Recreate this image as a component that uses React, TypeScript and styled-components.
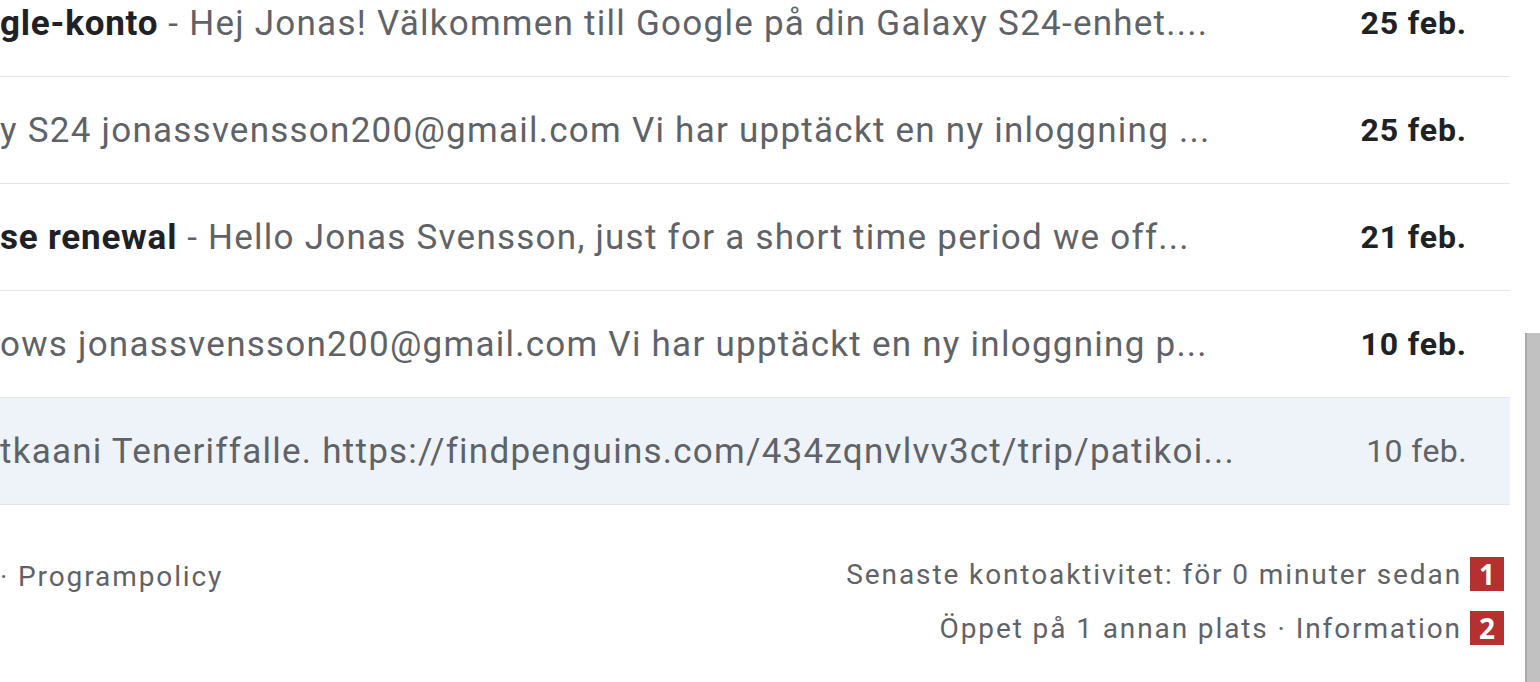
import React from 'react'
import styled, {createGlobalStyle} from 'styled-components'

const GlobalStyle = createGlobalStyle`
  html, body {
    margin: 0;
    padding: 0;
    background: #ffffff;
    overflow: hidden;
  }
  body {
    font-family: Roboto, "Noto Sans", Arial, sans-serif;
  }
`

const Page = styled.div`
  display: flex;
  width: 1540px;
  height: 682px;
  overflow: hidden;
  background: #ffffff;
`

const Main = styled.div`
  width: 1510px;
  display: flex;
  flex-direction: column;
`

const List = styled.div`
  display: flex;
  flex-direction: column;
  margin-top: -30px;
`

const Row = styled.div<{$selected?: boolean}>`
  display: flex;
  align-items: center;
  height: 106px;
  border-bottom: 1px solid #e3e7eb;
  background: ${p => (p.$selected ? '#eef3fa' : '#ffffff')};
`

const Line = styled.div`
  flex: 1;
  min-width: 0;
  white-space: nowrap;
  overflow: hidden;
  font-size: 35px;
  letter-spacing: 1.25px;
`

const Subject = styled.span`
  font-weight: 700;
  color: #202124;
  letter-spacing: 0.8px;
`

const Snippet = styled.span`
  color: #5f6368;
`

const DateCell = styled.div<{$unread?: boolean}>`
  width: 160px;
  padding-right: 43px;
  text-align: right;
  white-space: nowrap;
  font-size: 32px;
  letter-spacing: ${p => (p.$unread ? '0.9px' : '0.4px')};
  font-weight: ${p => (p.$unread ? 700 : 400)};
  color: ${p => (p.$unread ? '#202124' : '#5f6368')};
`

const Footer = styled.div`
  display: flex;
  justify-content: space-between;
  padding: 52px 6px 0 0;
  color: #5f6368;
  font-size: 28px;
  letter-spacing: 1.9px;
`

const FooterLeft = styled.div`
  white-space: nowrap;
  padding-top: 3px;
`

const FooterRight = styled.div`
  display: flex;
  flex-direction: column;
  align-items: flex-end;
  gap: 20px;
`

const FooterLine = styled.div`
  display: flex;
  align-items: center;
  gap: 8px;
  white-space: nowrap;
`

const Badge = styled.span`
  display: inline-flex;
  align-items: center;
  justify-content: center;
  width: 34px;
  height: 34px;
  background: #b5302f;
  color: #ffffff;
  font-family: "Open Sans", Roboto, sans-serif;
  font-weight: 700;
  font-size: 28px;
  letter-spacing: 0;
`

const Gutter = styled.div`
  flex: 1;
  display: flex;
  justify-content: flex-end;
`

const Track = styled.div`
  width: 15px;
  display: flex;
  flex-direction: column;
`

const Thumb = styled.div`
  margin-top: 333px;
  flex: 1;
  background: #c1c1c1;
  border-left: 2px solid #a9a9a9;
`

interface IMail {
	subject?: string
	snippet: string
	date: string
	unread: boolean
	selected?: boolean
}

const mails: IMail[] = [
	{subject: 'gle-konto', snippet: ' - Hej Jonas! Välkommen till Google på din Galaxy S24-enhet....', date: '25 feb.', unread: true},
	{snippet: 'y S24 jonassvensson200@gmail.com Vi har upptäckt en ny inloggning ...', date: '25 feb.', unread: true},
	{subject: 'se renewal', snippet: ' - Hello Jonas Svensson, just for a short time period we off...', date: '21 feb.', unread: true},
	{snippet: 'ows jonassvensson200@gmail.com Vi har upptäckt en ny inloggning p...', date: '10 feb.', unread: true},
	{snippet: 'tkaani Teneriffalle. https://findpenguins.com/434zqnvlvv3ct/trip/patikoi...', date: '10 feb.', unread: false, selected: true},
]

const App = () => {
	return (
		<Page>
			<GlobalStyle/>
			<Main>
				<List>
					{mails.map((m, i) => (
						<Row key={i} $selected={m.selected}>
							<Line>
								{m.subject && <Subject>{m.subject}</Subject>}
								<Snippet>{m.snippet}</Snippet>
							</Line>
							<DateCell $unread={m.unread}>{m.date}</DateCell>
						</Row>
					))}
				</List>
				<Footer>
					<FooterLeft>· Programpolicy</FooterLeft>
					<FooterRight>
						<FooterLine>Senaste kontoaktivitet: för 0 minuter sedan<Badge>1</Badge></FooterLine>
						<FooterLine>Öppet på 1 annan plats · Information<Badge>2</Badge></FooterLine>
					</FooterRight>
				</Footer>
			</Main>
			<Gutter>
				<Track>
					<Thumb/>
				</Track>
			</Gutter>
		</Page>
	)
}

export default App
